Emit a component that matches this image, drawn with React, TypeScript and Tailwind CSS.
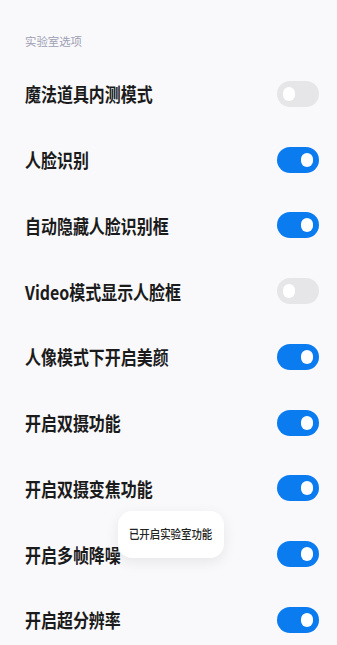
import React from "react";

const rows: { label: string; on: boolean }[] = [
  { label: "魔法道具内测模式", on: false },
  { label: "人脸识别", on: true },
  { label: "自动隐藏人脸识别框", on: true },
  { label: "Video模式显示人脸框", on: false },
  { label: "人像模式下开启美颜", on: true },
  { label: "开启双摄功能", on: true },
  { label: "开启双摄变焦功能", on: true },
  { label: "开启多帧降噪", on: true },
  { label: "开启超分辨率", on: true },
];

function Toggle({ on }: { on: boolean }) {
  return on ? (
    <div className="w-[42px] h-[26px] rounded-full bg-[#0b7bf0] flex items-center justify-end pr-[6px]">
      <div className="w-[12px] h-[14px] rounded-full bg-white" />
    </div>
  ) : (
    <div className="w-[42px] h-[26px] rounded-full bg-[#e6e6e9] flex items-center justify-start pl-[6px]">
      <div className="w-[12px] h-[14px] rounded-full bg-white" />
    </div>
  );
}

export default function App() {
  return (
    <div
      className="relative w-[337px] h-[645px] overflow-hidden bg-[#f9f9fb]"
      style={{ fontFamily: '"Noto Sans CJK SC", "Noto Sans", sans-serif' }}
    >
      <div className="pt-[33px] pl-[25px] h-[61px]">
        <div className="text-[11.4px] leading-[17px] text-[#9da0b4]">实验室选项</div>
      </div>
      <div className="flex flex-col">
        {rows.map((r) => (
          <div key={r.label} className="h-[65.75px] flex items-center justify-between pl-[25px] pr-[18px]">
            <span className="inline-block origin-left scale-x-[0.84] whitespace-nowrap text-[19px] font-bold text-[#1b1b1b] leading-none">
              {r.label}
            </span>
            <Toggle on={r.on} />
          </div>
        ))}
      </div>
      <div className="absolute left-[118px] top-[511px] w-[106px] h-[47px] rounded-[14px] bg-white shadow-[0_4px_14px_rgba(0,0,0,0.08)] flex items-center justify-center">
        <span className="inline-block scale-x-[0.84] whitespace-nowrap text-[12.4px] font-medium text-[#222]">已开启实验室功能</span>
      </div>
    </div>
  );
}
